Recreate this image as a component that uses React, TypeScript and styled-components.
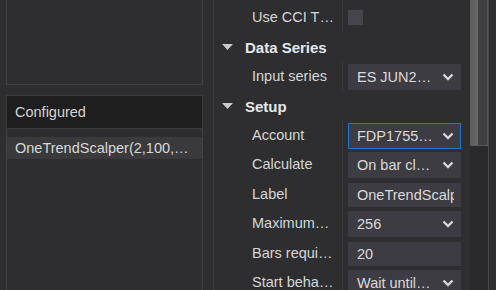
import React from 'react';
import styled, { createGlobalStyle } from 'styled-components';

type PropRow =
  | { kind: 'header'; title: string }
  | { kind: 'text'; label: string; value: string }
  | { kind: 'select'; label: string; value: string; focused?: boolean }
  | { kind: 'check'; label: string };

const rows: PropRow[] = [
  { kind: 'text', label: '', value: '' },
  { kind: 'check', label: 'Use CCI T…' },
  { kind: 'header', title: 'Data Series' },
  { kind: 'select', label: 'Input series', value: 'ES JUN2…' },
  { kind: 'header', title: 'Setup' },
  { kind: 'select', label: 'Account', value: 'FDP1755…', focused: true },
  { kind: 'select', label: 'Calculate', value: 'On bar cl…' },
  { kind: 'text', label: 'Label', value: 'OneTrendScalper(2,100,…)' },
  { kind: 'select', label: 'Maximum…', value: '256' },
  { kind: 'text', label: 'Bars requi…', value: '20' },
  { kind: 'select', label: 'Start beha…', value: 'Wait until…' },
];

function Chevron() {
  return (
    <svg width="12" height="8" viewBox="0 0 12 8">
      <polyline points="1.5,1.5 6,6 10.5,1.5" fill="none" stroke="#d6d6d6" strokeWidth="2.4" />
    </svg>
  );
}

function Triangle() {
  return (
    <svg width="11" height="6" viewBox="0 0 11 6">
      <polygon points="0,0 11,0 5.5,6" fill="#c9c9c9" />
    </svg>
  );
}

function PropertyRow({ row }: { row: PropRow }) {
  if (row.kind === 'header') {
    return (
      <CategoryRow>
        <Triangle />
        <span>{row.title}</span>
      </CategoryRow>
    );
  }

  return (
    <Row>
      <LabelCell>{row.label}</LabelCell>
      <ValueCell>
        {row.kind === 'check' && <CheckBox />}
        {row.kind === 'text' && (
          <TextBox>
            <TextValue>{row.value}</TextValue>
          </TextBox>
        )}
        {row.kind === 'select' && (
          <SelectBox $focused={row.focused}>
            <SelectText>{row.value}</SelectText>
            <Chevron />
          </SelectBox>
        )}
      </ValueCell>
    </Row>
  );
}

export default function App() {
  return (
    <>
      <GlobalStyle />
      <Window>
        <LeftColumn>
          <AvailableBox />
          <ConfiguredHeader>Configured</ConfiguredHeader>
          <ConfiguredList>
            <ListItem>OneTrendScalper(2,100,…</ListItem>
          </ConfiguredList>
        </LeftColumn>
        <RightColumn>
          <Grid>
            {rows.map((row, i) => (
              <PropertyRow key={i} row={row} />
            ))}
          </Grid>
          <ScrollTrack>
            <ScrollThumb />
          </ScrollTrack>
        </RightColumn>
      </Window>
    </>
  );
}

const GlobalStyle = createGlobalStyle`
  html, body {
    margin: 0;
    padding: 0;
    background: #2e2e30;
    overflow: hidden;
  }

  body {
    font-family: 'Liberation Sans', Arial, sans-serif;
    color: #d8d8d8;
  }

  * {
    box-sizing: border-box;
  }
`;

const Window = styled.div`
  display: flex;
  width: 496px;
  height: 290px;
  overflow: hidden;
  background: #2e2e30;
`;

const LeftColumn = styled.div`
  display: flex;
  flex-direction: column;
  width: 214px;
  flex-shrink: 0;
  padding: 0 10px 0 6px;
  border-right: 1px solid #3b3b3f;
`;

const AvailableBox = styled.div`
  height: 101px;
  margin-top: -16px;
  border: 1px solid #404045;
`;

const ConfiguredHeader = styled.div`
  height: 34px;
  margin-top: 10px;
  padding-left: 8px;
  display: flex;
  align-items: center;
  background: #1e1e1e;
  border: 1px solid #3a3a3d;
  font-size: 14.5px;
  color: #d4d4d4;
`;

const ConfiguredList = styled.div`
  flex: 1;
  padding-top: 8px;
  border-left: 1px solid #404045;
  border-right: 1px solid #404045;
`;

const ListItem = styled.div`
  height: 22px;
  line-height: 22px;
  padding: 0 8px;
  background: #3a3a3c;
  font-size: 14.5px;
  color: #d8d8d8;
  white-space: nowrap;
  overflow: hidden;
  text-overflow: ellipsis;
`;

const RightColumn = styled.div`
  flex: 1;
  min-width: 0;
  display: flex;
`;

const Grid = styled.div`
  width: 256px;
  flex-shrink: 0;
  margin-top: -26.75px;
  display: flex;
  flex-direction: column;
`;

const Row = styled.div`
  display: flex;
  height: 29.5px;
  flex-shrink: 0;
`;

const CategoryRow = styled.div`
  display: flex;
  align-items: center;
  gap: 12px;
  height: 29.5px;
  flex-shrink: 0;
  padding-left: 8px;
  font-size: 15px;
  font-weight: bold;
  color: #e4e8ee;

  svg {
    margin-top: -1px;
  }
`;

const LabelCell = styled.div`
  width: 128px;
  flex-shrink: 0;
  padding: 0 8px 0 38px;
  line-height: 29.5px;
  font-size: 14.5px;
  color: #d6d6d6;
  white-space: nowrap;
  overflow: hidden;
  text-overflow: ellipsis;
`;

const ValueCell = styled.div`
  flex: 1;
  min-width: 0;
  display: flex;
  align-items: center;
  padding: 0 9px 0 5px;
  border-left: 1px solid #3a3a3e;
`;

const CheckBox = styled.div`
  width: 15px;
  height: 15px;
  background: #46454c;
`;

const TextBox = styled.div`
  flex: 1;
  min-width: 0;
  height: 24px;
  display: flex;
  align-items: center;
  padding: 0 6px 0 8px;
  border: 1px solid transparent;
  background: #3d3c43;
`;

const TextValue = styled.span`
  flex: 1;
  min-width: 0;
  font-size: 14.5px;
  color: #dadada;
  white-space: nowrap;
  overflow: hidden;
`;

const SelectBox = styled.div<{ $focused?: boolean }>`
  flex: 1;
  min-width: 0;
  height: 26px;
  display: flex;
  align-items: center;
  padding: 0 6px 0 8px;
  border: 1px solid ${({ $focused }) => ($focused ? '#1e78cc' : 'transparent')};
  background: #3d3c43;
`;

const SelectText = styled.span`
  flex: 1;
  min-width: 0;
  font-size: 14.5px;
  color: #dadada;
  white-space: nowrap;
  overflow: hidden;
  text-overflow: ellipsis;
`;

const ScrollTrack = styled.div`
  width: 19px;
  flex-shrink: 0;
  height: 290px;
  background: #2a2a2c;
  border-right: 1px solid #47474b;
`;

const ScrollThumb = styled.div`
  height: 146px;
  background: linear-gradient(to right, #5c5c5c 0%, #686868 45%, #404040 48%, #3e3e3e 100%);
  border-bottom: 1px solid #5a5a5a;
  border-right: 1px solid #555;
`;
